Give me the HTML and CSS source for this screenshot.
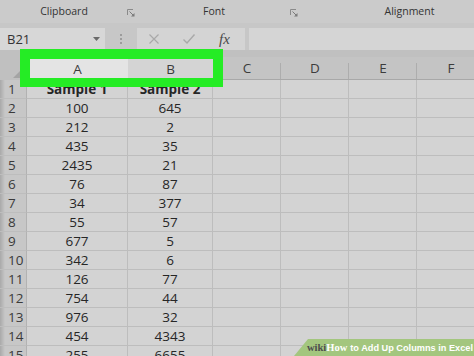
FILE: index.html
```html
<!DOCTYPE html>
<html>
<head>
<meta charset="utf-8">
<link rel="stylesheet" href="styles.css">
</head>
<body>
<div class="sheet">
  <div class="ribbon">
    <div class="group g-clip"><span class="glabel">Clipboard</span><svg class="launcher" width="8" height="8" viewBox="0 0 8 8"><path d="M0.5 6V0.5H6" fill="none" stroke="#8a8a8a" stroke-width="1"/><path d="M2.5 2.5L6.8 6.8" stroke="#7a7a7a" stroke-width="1"/><path d="M7.5 4V7.5H4Z" fill="#7a7a7a"/></svg></div>
    <div class="group g-font"><span class="glabel">Font</span><svg class="launcher" width="8" height="8" viewBox="0 0 8 8"><path d="M0.5 6V0.5H6" fill="none" stroke="#8a8a8a" stroke-width="1"/><path d="M2.5 2.5L6.8 6.8" stroke="#7a7a7a" stroke-width="1"/><path d="M7.5 4V7.5H4Z" fill="#7a7a7a"/></svg></div>
    <div class="group g-align"><span class="glabel">Alignment</span></div>
  </div>
  <div class="fbar">
    <div class="namebox"><span class="nbtext">B21</span><svg class="caret" width="7" height="4" viewBox="0 0 7 4"><path d="M0 0H7L3.5 4Z" fill="#6a6a6a"/></svg></div>
    <div class="dots"><i></i><i></i><i></i></div>
    <div class="fxbox">
      <svg class="ico" width="12" height="12" viewBox="0 0 12 12"><path d="M1.5 1.5L10.5 10.5M10.5 1.5L1.5 10.5" stroke="#a9a9a9" stroke-width="1.2"/></svg>
      <svg class="ico" width="14" height="12" viewBox="0 0 14 12"><path d="M1.5 6.5L5 10L12.5 1.5" fill="none" stroke="#a9a9a9" stroke-width="1.4"/></svg>
      <span class="fx">fx</span>
    </div>
    <div class="finput"></div>
  </div>
  <div class="colheads">
    <div class="corner"><span class="tri"></span></div>
    <div class="ch ch-a">A</div>
    <div class="ch ch-b">B</div>
    <div class="ch">C</div>
    <div class="ch">D</div>
    <div class="ch">E</div>
    <div class="ch">F</div>
  </div>
  <div class="grid">
    <div class="rh">1</div><div class="c b">Sample 1</div><div class="c b">Sample 2</div><div class="c"></div><div class="c"></div><div class="c"></div><div class="c"></div>
    <div class="rh">2</div><div class="c">100</div><div class="c">645</div><div class="c"></div><div class="c"></div><div class="c"></div><div class="c"></div>
    <div class="rh">3</div><div class="c">212</div><div class="c">2</div><div class="c"></div><div class="c"></div><div class="c"></div><div class="c"></div>
    <div class="rh">4</div><div class="c">435</div><div class="c">35</div><div class="c"></div><div class="c"></div><div class="c"></div><div class="c"></div>
    <div class="rh">5</div><div class="c">2435</div><div class="c">21</div><div class="c"></div><div class="c"></div><div class="c"></div><div class="c"></div>
    <div class="rh">6</div><div class="c">76</div><div class="c">87</div><div class="c"></div><div class="c"></div><div class="c"></div><div class="c"></div>
    <div class="rh">7</div><div class="c">34</div><div class="c">377</div><div class="c"></div><div class="c"></div><div class="c"></div><div class="c"></div>
    <div class="rh">8</div><div class="c">55</div><div class="c">57</div><div class="c"></div><div class="c"></div><div class="c"></div><div class="c"></div>
    <div class="rh">9</div><div class="c">677</div><div class="c">5</div><div class="c"></div><div class="c"></div><div class="c"></div><div class="c"></div>
    <div class="rh">10</div><div class="c">342</div><div class="c">6</div><div class="c"></div><div class="c"></div><div class="c"></div><div class="c"></div>
    <div class="rh">11</div><div class="c">126</div><div class="c">77</div><div class="c"></div><div class="c"></div><div class="c"></div><div class="c"></div>
    <div class="rh">12</div><div class="c">754</div><div class="c">44</div><div class="c"></div><div class="c"></div><div class="c"></div><div class="c"></div>
    <div class="rh">13</div><div class="c">976</div><div class="c">32</div><div class="c"></div><div class="c"></div><div class="c"></div><div class="c"></div>
    <div class="rh">14</div><div class="c">454</div><div class="c">4343</div><div class="c"></div><div class="c"></div><div class="c"></div><div class="c"></div>
    <div class="rh">15</div><div class="c">255</div><div class="c">6655</div><div class="c"></div><div class="c"></div><div class="c"></div><div class="c"></div>
  </div>
  <div class="highlight"></div>
  <div class="wm"><span class="wm-wiki">wiki</span><span class="wm-how">How</span><span class="wm-title">to Add Up Columns in Excel</span></div>
</div>
</body>
</html>
```

FILE: styles.css
```css
html, body {
  margin: 0;
  padding: 0;
}
body {
  width: 474px;
  height: 356px;
  overflow: hidden;
  background: #d2d2d2;
  font-family: "Open Sans", "Noto Sans", sans-serif;
}
.sheet {
  position: relative;
  width: 474px;
  height: 356px;
  overflow: hidden;
  background: #d2d2d2;
}

/* ribbon group labels */
.ribbon {
  height: 23px;
  display: flex;
  background: #cbcbcb;
}
.group {
  display: flex;
  align-items: center;
  height: 23px;
  box-sizing: border-box;
}
.g-clip { width: 140px; padding-right: 5px; }
.g-font { width: 163px; padding-right: 5px; }
.g-align { flex: 1; padding-left: 42px; }
.glabel {
  flex: 1;
  text-align: center;
  font-size: 10.5px;
  color: #333333;
  line-height: 23px;
}
.g-clip .glabel { padding-left: 1px; }
.g-font .glabel { padding-right: 2px; }
.launcher { display: block; margin-top: 2px; }

/* formula bar */
.fbar {
  height: 27px;
  display: flex;
  align-items: flex-end;
  background: #c7c7c7;
  padding-top: 5px;
  box-sizing: border-box;
}
.namebox {
  width: 105px;
  height: 22px;
  background: #d7d7d7;
  display: flex;
  align-items: center;
  box-sizing: border-box;
  padding: 0 5px 0 7px;
}
.nbtext {
  flex: 1;
  font-size: 13px;
  color: #333;
}
.caret { display: block; }
.dots {
  width: 32px;
  height: 22px;
  display: flex;
  flex-direction: column;
  align-items: center;
  justify-content: center;
  gap: 2px;
}
.dots i {
  display: block;
  width: 2px;
  height: 2px;
  background: #9c9c9c;
}
.fxbox {
  width: 108px;
  height: 22px;
  background: #d4d4d4;
  display: flex;
  align-items: center;
  box-sizing: border-box;
  padding-left: 11px;
  gap: 22px;
}
.ico { display: block; }
.fx {
  font-family: "Liberation Serif", "DejaVu Serif", serif;
  font-style: italic;
  font-size: 15px;
  color: #4a4a4a;
  margin-left: 1px;
}
.finput {
  flex: 1;
  height: 22px;
  margin-left: 4px;
  background: #d5d5d5;
}

/* column headers */
.colheads {
  height: 30px;
  display: grid;
  grid-template-columns: 27px 101px 85px 68px 68px 68px 68px;
  background: #c0c0c0;
  align-items: end;
}
.corner {
  height: 23px;
  display: flex;
  justify-content: flex-end;
  align-items: flex-end;
  padding-right: 2px;
  padding-bottom: 2px;
  box-sizing: border-box;
}
.tri {
  display: block;
  width: 0;
  height: 0;
  border-left: 12px solid transparent;
  border-bottom: 12px solid #a4a4a4;
}
.ch {
  height: 23px;
  box-sizing: border-box;
  border-bottom: 1px solid #a8a8a8;
  text-align: center;
  font-size: 13.5px;
  line-height: 22px;
  color: #3c3c3c;
  background: #c4c4c4 linear-gradient(#adadad, #adadad) no-repeat right bottom / 1px 16px;
}
.ch-a {
  background: #e4e4e4;
  line-height: 24px;
}
.ch-b {
  background: #d4d4d4;
  border-bottom: 2px solid #4f6a4f;
  line-height: 24px;
}

/* cells */
.grid {
  display: grid;
  grid-template-columns: 27px 101px 85px 68px 68px 68px 68px;
  grid-auto-rows: 19px;
}
.rh, .c {
  box-sizing: border-box;
  border-bottom: 1px solid #bdbdbd;
  font-size: 13.5px;
  line-height: 18px;
  color: #262626;
}
.rh {
  border-right: 1px solid #b2b2b2;
  padding-left: 8px;
  color: #3a3a3a;
  background: #c7c7c7 linear-gradient(to right, #a9a9a9, rgba(199,199,199,0) 5px);
}
.c {
  border-right: 1px solid #bdbdbd;
  text-align: center;
  background: #d3d3d3;
}
.c.b { font-weight: 700; }

/* highlight box over A/B headers */
.highlight {
  position: absolute;
  left: 20px;
  top: 49px;
  width: 203px;
  height: 38px;
  box-sizing: border-box;
  border-style: solid;
  border-color: #25ec25;
  border-width: 10px 10px 9px 10px;
}

/* watermark */
.wm {
  position: absolute;
  right: 0;
  bottom: 0;
  width: 180px;
  height: 17px;
  background: #a3c67e;
  clip-path: polygon(14px 0, 100% 0, 100% 100%, 0 100%);
  display: flex;
  align-items: center;
  box-sizing: border-box;
  padding-left: 13px;
  white-space: nowrap;
}
.wm-wiki {
  font-family: "Liberation Serif", "DejaVu Serif", serif;
  font-weight: 700;
  font-size: 10.5px;
  color: #4d4d4d;
}
.wm-how {
  font-family: "Liberation Serif", "DejaVu Serif", serif;
  font-weight: 700;
  font-size: 10.5px;
  color: #ffffff;
  margin-right: 3px;
}
.wm-title {
  font-family: "Liberation Sans", Arial, sans-serif;
  font-weight: 700;
  font-size: 9.2px;
  color: #ffffff;
}
```
